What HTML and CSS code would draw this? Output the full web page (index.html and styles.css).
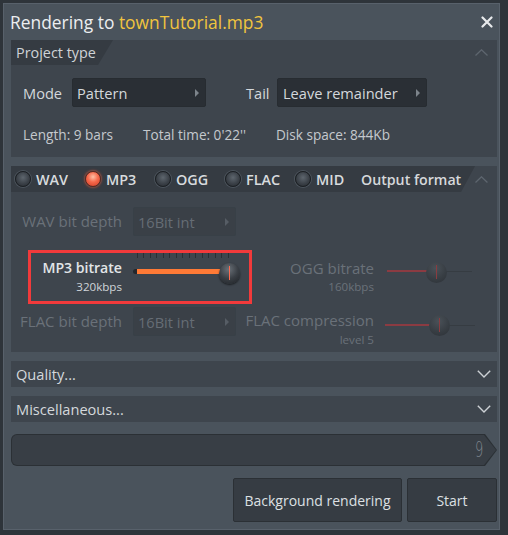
FILE: index.html
```html
<!DOCTYPE html>
<html>
<head>
<meta charset="utf-8">
<title>Rendering</title>
<link rel="stylesheet" href="styles.css">
</head>
<body>
<div class="window">
  <header class="titlebar">
    <span class="title">Rendering to <span class="file">townTutorial.mp3</span></span>
    <svg class="close" width="12" height="12" viewBox="0 0 12 12"><path d="M1.5 1.5L10.5 10.5M10.5 1.5L1.5 10.5" stroke="#e8eaec" stroke-width="2.2" stroke-linecap="round"/></svg>
  </header>
  <div class="content">
    <section class="panel project">
      <div class="phead">
        <div class="tab">Project type</div>
        <svg class="up" width="13" height="7" viewBox="0 0 13 7"><path d="M0.5 6.5L6.5 0.8L12.5 6.5" fill="none" stroke="#5e666f" stroke-width="1.3"/></svg>
      </div>
      <div class="mode-row">
        <span class="lbl mode-l">Mode</span>
        <div class="dd dd-mode"><span>Pattern</span><i class="tri"></i></div>
        <span class="lbl tail-l">Tail</span>
        <div class="dd dd-tail"><span>Leave remainder</span><i class="tri"></i></div>
      </div>
      <div class="info-row">
        <span class="i1">Length: 9 bars</span>
        <span class="i2">Total time: 0'22''</span>
        <span class="i3">Disk space: 844Kb</span>
      </div>
    </section>

    <section class="panel output">
      <div class="ohead">
        <div class="otab">
          <span class="radio"><i class="dot"></i>WAV</span>
          <span class="radio"><i class="dot on"></i>MP3</span>
          <span class="radio"><i class="dot"></i>OGG</span>
          <span class="radio"><i class="dot"></i>FLAC</span>
          <span class="radio mid"><i class="dot"></i>MID</span>
          <span class="oformat">Output format</span>
        </div>
        <svg class="up" width="13" height="7" viewBox="0 0 13 7"><path d="M0.5 6.5L6.5 0.8L12.5 6.5" fill="none" stroke="#5e666f" stroke-width="1.3"/></svg>
      </div>
      <div class="obody">
        <div class="grow row1">
          <div class="c1 dim"><span class="l29">WAV bit depth</span></div>
          <div class="c2"><div class="dd dd-dim"><span>16Bit int</span><i class="tri"></i></div></div>
        </div>
        <div class="grow row2">
          <div class="c1 stack"><span class="strong">MP3 bitrate</span><span class="sub">320kbps</span></div>
          <div class="c2">
            <div class="slider mp3">
              <div class="ticks"></div>
              <div class="cap"></div>
              <div class="fill"></div>
              <div class="knob"></div>
            </div>
          </div>
          <div class="c3 stack dim"><span class="big">OGG bitrate</span><span class="sub">160kbps</span></div>
          <div class="c4">
            <div class="slider ogg">
              <div class="rline"></div>
              <div class="rest"></div>
              <div class="knob dimk"></div>
            </div>
          </div>
        </div>
        <div class="grow row3">
          <div class="c1 dim"><span class="l29">FLAC bit depth</span></div>
          <div class="c2"><div class="dd dd-dim"><span>16Bit int</span><i class="tri"></i></div></div>
          <div class="c3 stack dim"><span class="l26">FLAC compression</span><span class="sub l14">level 5</span></div>
          <div class="c4">
            <div class="slider flac">
              <div class="rline"></div>
              <div class="rest"></div>
              <div class="knob dimk"></div>
            </div>
          </div>
        </div>
      </div>
      <div class="highlight"></div>
    </section>

    <div class="bar quality"><span>Quality...</span><svg width="14" height="8" viewBox="0 0 14 8"><path d="M0.8 0.8L7 7L13.2 0.8" fill="none" stroke="#cdd1d5" stroke-width="1.4"/></svg></div>
    <div class="bar misc"><span>Miscellaneous...</span><svg width="14" height="8" viewBox="0 0 14 8"><path d="M0.8 0.8L7 7L13.2 0.8" fill="none" stroke="#cdd1d5" stroke-width="1.4"/></svg></div>

    <div class="progress"><div class="progress-in"><span class="digit">9</span></div></div>

    <div class="buttons">
      <button class="btn bg">Background rendering</button>
      <button class="btn start">Start</button>
    </div>
  </div>
</div>
</body>
</html>
```

FILE: styles.css
```css
* { box-sizing: border-box; margin: 0; padding: 0; }
html, body { width: 508px; height: 535px; overflow: hidden; }
body {
  background: #2e343a;
  font-family: "Open Sans", "Noto Sans", sans-serif;
  color: #d4d8dc;
}
.window {
  margin: 3px 0 0 3px;
  width: 497px;
  height: 527px;
  background: #4a535c;
  border: 1px solid #58616b;
  display: flex;
  flex-direction: column;
}
.titlebar {
  height: 36px;
  flex: none;
  display: flex;
  align-items: center;
  justify-content: space-between;
  padding: 0 6px 0 6px;
}
.title { font-size: 17.4px; color: #eceef0; }
.file { color: #f1c43e; }

.content {
  padding: 0 2px 0 7px;
  display: flex;
  flex-direction: column;
}
.panel { background: #3e454d; position: relative; }
.project { height: 117px; }
.phead {
  height: 25px;
  display: flex;
  justify-content: space-between;
  align-items: center;
}
.tab {
  height: 25px;
  width: 102px;
  background: #353b42;
  clip-path: polygon(0 0, 100% 0, calc(100% - 15px) 100%, 0 100%);
  font-size: 14.4px;
  line-height: 25px;
  padding-left: 5px;
  color: #cfd3d7;
}
.up { margin-right: 9px; }

.lbl { font-size: 14.6px; color: #d4d8dc; }
.mode-row {
  margin-top: 13px;
  height: 29px;
  display: flex;
  align-items: center;
  padding-left: 12px;
}
.mode-l { width: 49px; }
.tail-l { width: 31px; margin-left: 40px; }
.dd {
  height: 29px;
  background: #2a2f35;
  border: 1px solid #272c31;
  border-radius: 2px;
  display: flex;
  align-items: center;
  justify-content: space-between;
  padding: 0 6px 0 4px;
  font-size: 14.6px;
  color: #d4d8dc;
}
.dd-mode { width: 134px; }
.dd-tail { width: 150px; padding-left: 5px; }
.tri {
  width: 0; height: 0;
  border-left: 4px solid #7d848b;
  border-top: 4px solid transparent;
  border-bottom: 4px solid transparent;
}
.info-row {
  margin-top: 18px;
  height: 20px;
  line-height: 20px;
  display: flex;
  padding-left: 12px;
  font-size: 13.6px;
  color: #c5c9cd;
}
.i1 { width: 120px; }
.i2 { width: 133px; }

.output { margin-top: 9px; height: 186px; }
.ohead {
  height: 26px;
  display: flex;
  align-items: center;
  justify-content: space-between;
}
.otab {
  height: 26px;
  width: 466px;
  background: #353b42;
  clip-path: polygon(0 0, 100% 0, calc(100% - 14px) 100%, 0 100%);
  display: flex;
  align-items: center;
  padding-left: 4px;
}
.radio {
  width: 70px;
  display: flex;
  align-items: center;
  gap: 5px;
  font-size: 14.4px;
  font-weight: 600;
  color: #d8dbde;
}
.radio.mid { width: 66px; }
.dot {
  width: 16px;
  height: 16px;
  border-radius: 50%;
  background: radial-gradient(circle at 50% 40%, #5e666e 0, #3b4148 55%, #25292e 100%);
  border: 1px solid #1c2024;
  box-shadow: 0 0 0 1px #4c545c;
}
.dot.on {
  background: radial-gradient(circle at 50% 35%, #ffc0a6 0, #f7694b 45%, #cf3b24 100%);
  border-color: #5a2a22;
  box-shadow: 0 0 0 1px #6e4a44, 0 0 3px #e0553a;
}
.oformat { font-size: 14.2px; font-weight: 600; color: #d5d8db; }

.obody { display: flex; flex-direction: column; }
.grow {
  display: grid;
  grid-template-columns: 122px 113px 138px 1fr;
  align-items: start;
}
.row1 { margin-top: 15px; height: 29px; }
.row2 { margin-top: 14px; height: 54px; }
.row3 { margin-top: 3px; height: 40px; }
.c1 { padding-right: 11px; text-align: right; font-size: 15px; white-space: nowrap; }
.c3 { padding-right: 10px; text-align: right; font-size: 15px; white-space: nowrap; }
.dim { color: #6a7179; }
.l29 { display: block; line-height: 29px; }
.l26 { display: block; line-height: 26px; }
.l14 { line-height: 14px !important; }
.stack { display: flex; flex-direction: column; align-items: flex-end; }
.row2 .stack { padding-top: 7px; }
.strong { font-weight: 600; line-height: 22px; color: #e2e5e8; font-size: 14.1px; }
.big { line-height: 22px; }
.sub { font-size: 11.6px; line-height: 16px; }
.row2 .c1 .sub { color: #d0d4d8; }
.dd-dim {
  width: 103px;
  background: #3a4047;
  border-color: #384047;
  color: #666d75;
}
.dd-dim .tri { border-left-color: #565d65; }

.slider { position: relative; height: 40px; }
.ticks {
  position: absolute;
  left: 4px; top: 3px;
  width: 94px; height: 5px;
  background: repeating-linear-gradient(90deg, #2a2f34 0, #2a2f34 1px, transparent 1px, transparent 6.5px);
}
.cap {
  position: absolute;
  left: 0; top: 19px;
  width: 6px; height: 5px;
  border-radius: 3px;
  background: #23272c;
}
.fill {
  position: absolute;
  left: 4px; top: 19px;
  width: 84px; height: 5px;
  background: #ff7a36;
}
.knob {
  position: absolute;
  left: 86px; top: 13px;
  width: 21px; height: 21px;
  border-radius: 50%;
  background: radial-gradient(circle at 45% 30%, #6a7178 0, #3a3f45 50%, #1d2024 100%);
  box-shadow: 0 1px 2px rgba(0,0,0,0.6);
}
.knob::after {
  content: "";
  position: absolute;
  left: 10px; top: 3px;
  width: 1px; height: 14px;
  background: #ff6a50;
}
.ogg .knob { left: 42px; top: 12px; }
.flac .knob { left: 45px; top: 8px; }
.dimk {
  background: radial-gradient(circle at 45% 30%, #4a5158 0, #383e44 55%, #2c3136 100%);
  box-shadow: none;
}
.dimk::after { background: #8a3c40; }
.rline {
  position: absolute;
  height: 2px;
  background: #8b3b42;
}
.rest {
  position: absolute;
  height: 1px;
  background: #363c42;
}
.ogg .rline { left: 3px; top: 20px; width: 42px; }
.ogg .rest { left: 60px; top: 21px; width: 28px; }
.flac .rline { left: 1px; top: 17px; width: 46px; }
.flac .rest { left: 63px; top: 18px; width: 28px; }

.highlight {
  position: absolute;
  left: 17px; top: 84px;
  width: 224px; height: 54px;
  border: 3px solid #f23a3b;
}

.bar {
  height: 26px;
  background: #3e454d;
  display: flex;
  align-items: center;
  justify-content: space-between;
  padding: 0 6px 0 5px;
  font-size: 14.6px;
  color: #d4d8dc;
}
.quality { margin-top: 9px; }
.misc { margin-top: 9px; }

.progress {
  margin-top: 12px;
  height: 32px;
  width: 486px;
  background: #2b3035;
  border-radius: 6px 0 0 6px;
  clip-path: polygon(0 0, calc(100% - 12px) 0, 100% 50%, calc(100% - 12px) 100%, 0 100%);
  padding: 1px;
}
.progress-in {
  height: 30px;
  background: #383e45;
  border-radius: 5px 0 0 5px;
  clip-path: polygon(0 0, calc(100% - 12px) 0, 100% 50%, calc(100% - 12px) 100%, 0 100%);
  display: flex;
  align-items: center;
  justify-content: flex-end;
  padding-right: 13px;
}
.digit {
  font-family: "DejaVu Sans", sans-serif;
  font-size: 21px;
  font-weight: 300;
  color: #7f868e;
  display: inline-block;
  transform: scaleX(0.62);
  transform-origin: right center;
}

.buttons {
  margin-top: 12px;
  display: flex;
  justify-content: flex-end;
  gap: 5px;
}
.btn {
  height: 44px;
  background: #363c43;
  border: 1px solid #2b3035;
  border-radius: 2px;
  font-family: "Open Sans", "Noto Sans", sans-serif;
  font-size: 14px;
  color: #dde0e3;
}
.btn.bg { width: 169px; }
.btn.start { width: 90px; }
```
